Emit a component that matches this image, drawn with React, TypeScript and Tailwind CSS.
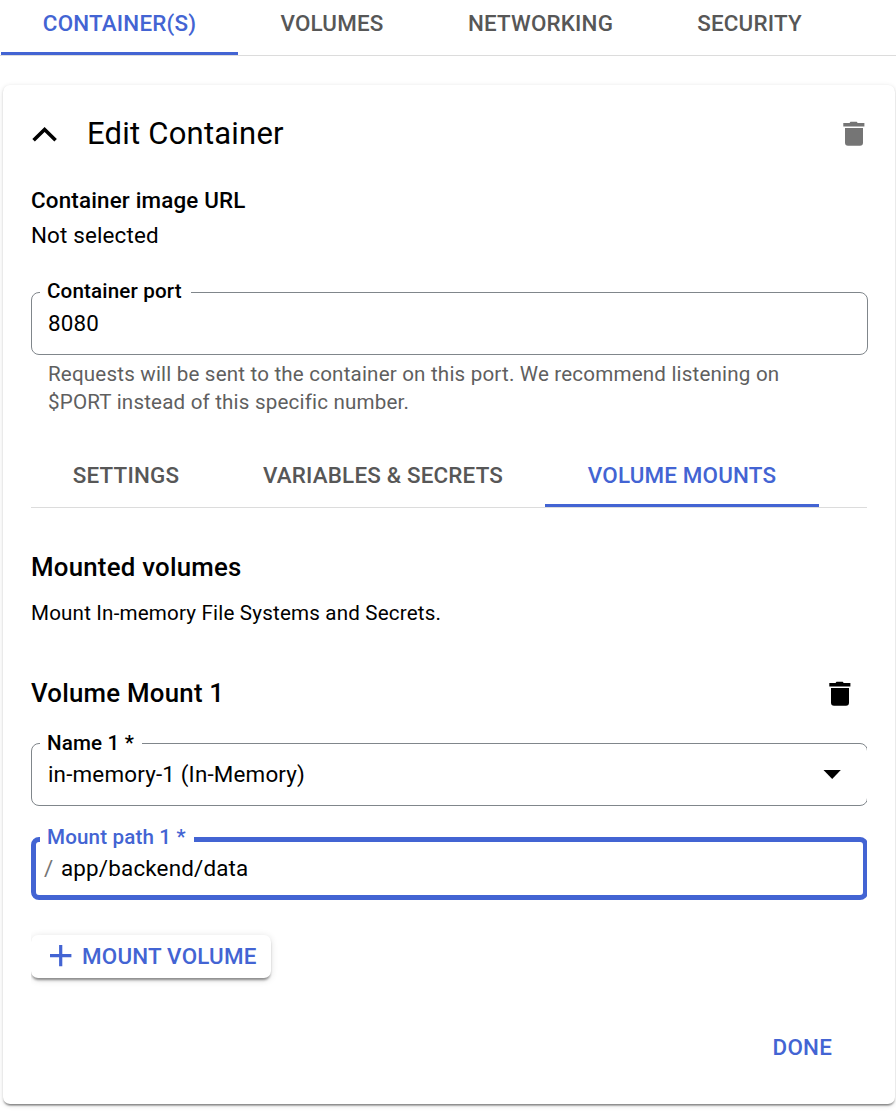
import type { ReactNode } from "react";

type Tab = { label: string; width: string; active?: boolean };

const mainTabs: Tab[] = [
  { label: "CONTAINER(S)", width: "w-[237px]", active: true },
  { label: "VOLUMES", width: "w-[188px]" },
  { label: "NETWORKING", width: "w-[229px]" },
  { label: "SECURITY", width: "w-[189px]" },
];

const containerTabs: Tab[] = [
  { label: "SETTINGS", width: "w-[190px]" },
  { label: "VARIABLES & SECRETS", width: "w-[324px]" },
  { label: "VOLUME MOUNTS", width: "w-[274px]", active: true },
];

function TabBar({ tabs, className }: { tabs: Tab[]; className: string }) {
  return (
    <div role="tablist" className={`flex border-b border-[#dcdcdc] ${className}`}>
      {tabs.map((tab) => (
        <button
          key={tab.label}
          role="tab"
          aria-selected={!!tab.active}
          className={`flex shrink-0 flex-col justify-end whitespace-nowrap text-[22.4px] font-medium leading-[26px] tracking-[0.18px] ${tab.width} ${
            tab.active ? "text-[#4364d3]" : "text-[#575757]"
          }`}
        >
          <span className="mb-[16px] self-center">{tab.label}</span>
          <span className={`h-[3px] w-full ${tab.active ? "bg-[#4364d3]" : ""}`} />
        </button>
      ))}
    </div>
  );
}

function TrashIcon({ className }: { className: string }) {
  return (
    <svg viewBox="0 0 22 25" className={`h-[25px] w-[22px] ${className}`} fill="currentColor">
      <path d="M0.3 2.1H6.5L7.5 0.8H13.7L14.7 2.1H21.4V5.4H0.3z" />
      <path d="M2 7H20V21.8Q20 24.8 17 24.8H5Q2 24.8 2 21.8z" />
    </svg>
  );
}

function Field({
  label,
  focused,
  className,
  legendClassName,
  children,
}: {
  label: string;
  focused?: boolean;
  className: string;
  legendClassName: string;
  children: ReactNode;
}) {
  return (
    <fieldset
      className={`min-w-0 rounded-[8px] ${
        focused ? "border-[5px] border-[#4364d3] pl-1" : "border border-[#80868b] pl-2"
      } ${className}`}
    >
      <legend
        className={`h-[24px] pl-[7px] text-[20.6px] font-medium tracking-[0.15px] ${
          focused ? "text-[#4364d3]" : "text-black"
        } ${legendClassName}`}
      >
        {label}
      </legend>
      {children}
    </fieldset>
  );
}

export default function App() {
  return (
    <div className="h-[1112px] w-[896px] overflow-hidden bg-white font-[Roboto,sans-serif] text-black">
      <TabBar tabs={mainTabs} className="h-[56px] pl-px" />

      <section className="mt-[29px] ml-[3px] flex h-[1019px] w-[892px] flex-col rounded-[7px] pr-[27px] pl-[28px] shadow-[0_3px_2px_-2px_rgba(0,0,0,0.34),0_1.5px_1.5px_0_rgba(0,0,0,0.18),0_1.5px_5px_0_rgba(0,0,0,0.12)]">
        <header className="mt-[29px] flex h-[40px] items-center">
          <svg viewBox="0 0 26 16" className="h-[16px] w-[26px]" fill="none" stroke="currentColor" strokeWidth="3.6">
            <path d="M2.6 14.2L13.6 3.4L24.6 14.2" />
          </svg>
          <h1 className="ml-[30px] text-[31px] font-normal leading-[40px] tracking-[0.22px]">Edit Container</h1>
          <button aria-label="Delete container" className="-mt-[2px] mr-[3px] ml-auto">
            <TrashIcon className="text-[#757575]" />
          </button>
        </header>

        <h2 className="mt-[32px] text-[22.4px] font-medium leading-[28px] tracking-[0.17px]">Container image URL</h2>
        <p className="mt-[7px] text-[22.4px] leading-[28px] tracking-[0.15px]">Not selected</p>

        <Field label="Container port" className="mt-[31px] h-[75px]" legendClassName="pr-[9px] leading-[22px]">
          <div className="mt-[5px] px-2 text-[22.4px] leading-[28px] tracking-[0.2px]">8080</div>
        </Field>
        <p className="mt-[5px] pl-[17px] text-[20.6px] leading-[28px] tracking-[0.175px] text-[#5f5f5f]">
          Requests will be sent to the container on this port. We recommend listening on
          <br />
          $PORT instead of this specific number.
        </p>

        <TabBar tabs={containerTabs} className="mt-[36px] mr-px h-[56px]" />

        <h2 className="mt-[43px] text-[25.8px] font-medium leading-[32px] tracking-[0.24px]">Mounted volumes</h2>
        <p className="mt-[16px] text-[20.6px] leading-[28px] tracking-[0.175px]">
          Mount In-memory File Systems and Secrets.
        </p>

        <div className="mt-[50px] flex h-[32px] items-center">
          <h3 className="text-[25.8px] font-medium leading-[32px] tracking-[0.24px]">Volume Mount 1</h3>
          <button aria-label="Delete volume mount" className="mr-[17px] ml-auto">
            <TrashIcon className="text-black" />
          </button>
        </div>

        <div className="mr-px overflow-hidden pt-[22px]">
          <Field label="Name 1 *" className="-mr-px h-[75px]" legendClassName="pr-[8px] leading-[24px]">
            <div className="mt-[5px] flex items-center pr-[26px] pl-2 text-[22.4px] leading-[28px] tracking-[0.18px]">
              <span>in-memory-1 (In-Memory)</span>
              <svg viewBox="0 0 18 9" className="ml-auto h-[9px] w-[18px]" fill="currentColor">
                <path d="M0.5 0H17.8L9.2 9z" />
              </svg>
            </div>
          </Field>

          <Field
            label="Mount path 1 *"
            focused
            className="mt-[21px] -mr-px h-[73px]"
            legendClassName="pr-[8px] leading-[20px]"
          >
            <div className="mt-[3px] flex pl-1 text-[22.4px] leading-[28px] tracking-[0.18px]">
              <span className="w-[17px] text-[#757575]">/</span>
              <span>app/backend/data</span>
            </div>
          </Field>
        </div>

        <div className="-mb-[10px] overflow-hidden pt-[35px] pb-[10px]">
          <button className="flex h-[43px] w-[240px] items-center rounded-[7px] pl-[18px] text-[22.4px] font-medium tracking-[0.2px] text-[#4364d3] shadow-[0_4px_3px_-2px_rgba(0,0,0,0.3),0_2px_2px_0_rgba(0,0,0,0.16),0_1.5px_7px_0_rgba(0,0,0,0.13)]">
            <svg viewBox="0 0 23 23" className="h-[23px] w-[23px]" fill="none" stroke="currentColor" strokeWidth="3.2">
              <path d="M1 10.7H22.4M11.7 0V21.3" />
            </svg>
            <span className="ml-[10px] whitespace-nowrap">MOUNT VOLUME</span>
          </button>
        </div>

        <button className="mt-[55px] mr-[36px] self-end text-[22.4px] font-medium leading-[28px] tracking-[0.2px] text-[#4364d3]">
          DONE
        </button>
      </section>
    </div>
  );
}
